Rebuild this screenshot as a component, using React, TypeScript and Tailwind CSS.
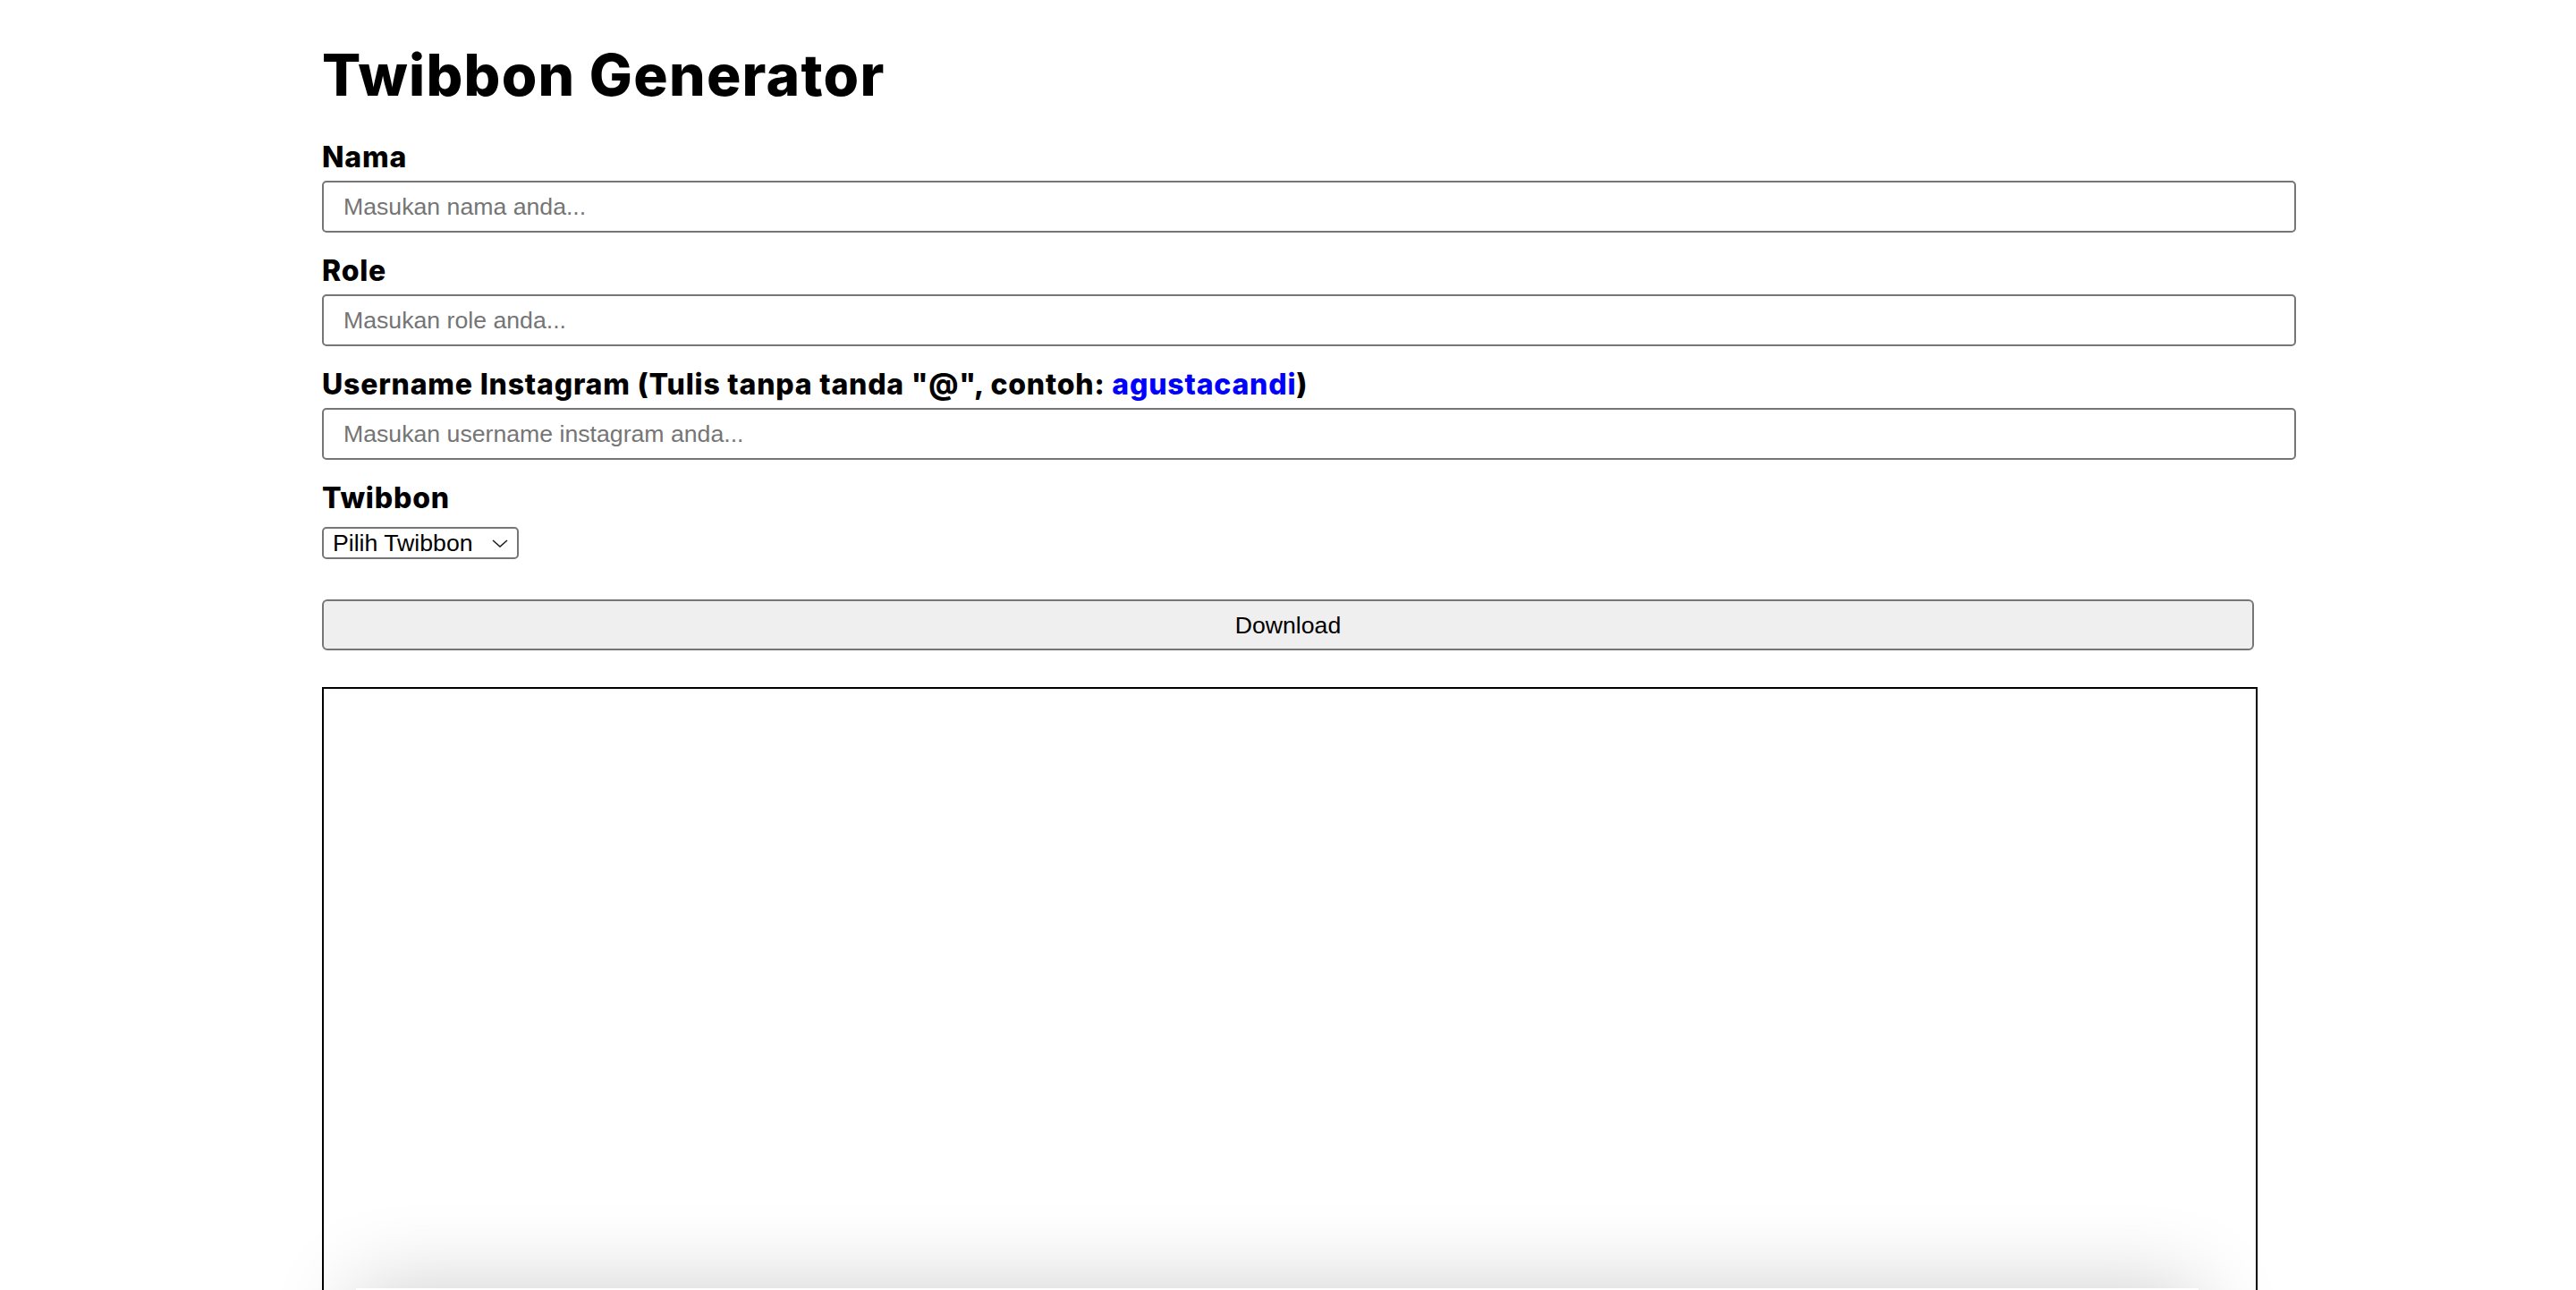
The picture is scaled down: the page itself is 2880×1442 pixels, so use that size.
import React from 'react';

const labelCls = "block text-[32px] leading-none font-extrabold tracking-[0.025em] text-black";
const inputCls =
  "block w-[2207px] h-[58px] px-[22px] border-2 border-[#767676] rounded-[5px] bg-white font-['Liberation_Sans',Arial,sans-serif] text-[26.67px] text-black placeholder:text-[#757575] outline-none";

const App = () => {
  return (
    <div className="min-h-screen bg-white font-['Inter',sans-serif]">
      <div className="pl-[360px] pb-[40px] flex flex-col items-start">
        <h1 className="mt-[52px] text-[64px] leading-none font-extrabold tracking-[0.02em] text-black">
          Twibbon Generator
        </h1>

        <label className={labelCls + " mt-[44px] mb-[10px]"}>Nama</label>
        <input className={inputCls} placeholder="Masukan nama anda..." />

        <label className={labelCls + " mt-[27px] mb-[10px]"}>Role</label>
        <input className={inputCls} placeholder="Masukan role anda..." />

        <label className={labelCls + " mt-[27px] mb-[10px]"}>
          Username Instagram (Tulis tanpa tanda "@", contoh:{' '}
          <span className="text-[#0000ff]">agustacandi</span>)
        </label>
        <input className={inputCls} placeholder="Masukan username instagram anda..." />

        <label className={labelCls + " mt-[27px] mb-[16px]"}>Twibbon</label>
        <div className="flex items-center justify-between w-[220px] h-[36px] pl-[10px] pr-[10px] border-2 border-[#767676] rounded-[5px] bg-white font-['Liberation_Sans',Arial,sans-serif] text-[26.67px] text-black">
          <span className="leading-none">Pilih Twibbon</span>
          <svg width="18" height="9" viewBox="0 0 18 9" fill="none">
            <path d="M1 1 L9 8 L17 1" stroke="#1f1f1f" strokeWidth="1.6" />
          </svg>
        </div>

        <button className="mt-[45px] w-[2160px] h-[57px] border-2 border-[#767676] rounded-[6px] bg-[#efefef] font-['Liberation_Sans',Arial,sans-serif] text-[26.67px] text-black">
          Download
        </button>

        <div className="mt-[41px] w-[2164px] h-[2164px] border-2 border-black bg-white flex flex-col items-center">
          <div className="mt-[670px] mr-[28px] w-[2060px] h-[1200px] bg-white shadow-[0_0_90px_rgba(0,0,0,0.2)]" />
        </div>
      </div>
    </div>
  );
};

export default App;
